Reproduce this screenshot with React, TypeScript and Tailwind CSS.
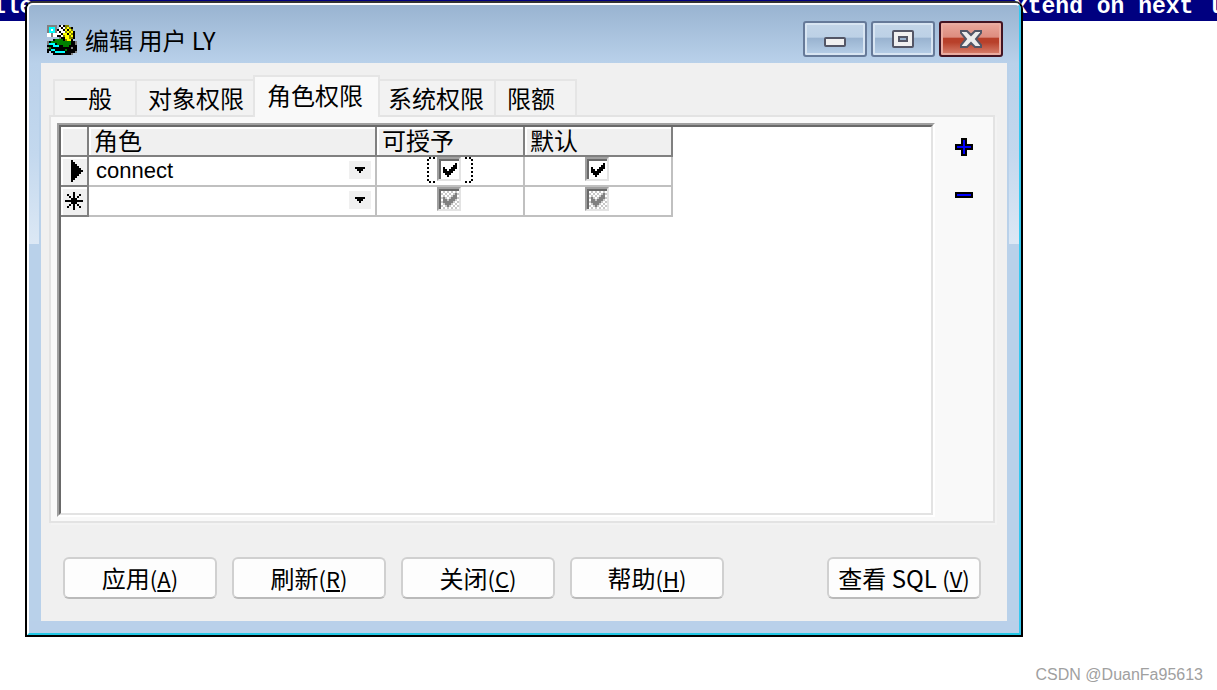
import { useState } from "react";
import clsx from "clsx";

const palette: Record<string, string> = {
  K: "#000000",
  G: "#808080",
  C: "#00ffff",
  W: "#ffffff",
  Y: "#ffff00",
  O: "#808000",
  g: "#008000",
  B: "#0000ff",
};

const userIcon = [
  "GGGGG.KWKOO....",
  "GCCCG.WKWOYOK..",
  "GCWCGKWWKYKYO..",
  "GCCCGWKWWOYOYK.",
  "WWGWWWWKYYKYOK.",
  "WWGWWKKWOYYOYK.",
  "......GKKYYOOK.",
  "...KggggKOYYK..",
  "GKggggggggggKKG",
  "GCCCKgggggggKKG",
  "KKKCCCKKgggKKKK",
  "GgKKKKKKKKKKGKK",
  "KKCCKKKKKgKKKKK",
  "K.KKCCCCCKKKKKG",
  "...KKKKKKKKKG..",
];

const plusIcon = [
  "...KKK...",
  "...KBK...",
  "...KBK...",
  "KKKKBKKKK",
  "KBBBBBBBK",
  "KKKKBKKKK",
  "...KBK...",
  "...KBK...",
  "...KKK...",
];

const minusIcon = ["KKKKKKKKK", "KBBBBBBBK", "KKKKKKKKK"];

const arrowIcon = ["KKKKK", ".KKK.", "..K.."];

const checkIcon = ["......K", ".....KK", "K...KKK", "KK.KKK.", "KKKKK..", ".KKK...", "..K...."];

const currentRowIcon = ["K.....", "KK....", "KKK...", "KKKK..", "KKKKK.", "KKKKKK", "KKKKK.", "KKKK..", "KKK...", "KK....", "K....."];

const newRowIcon = [
  "....K....",
  ".K..K..K.",
  "..K.K.K..",
  "...KKK...",
  "KKKKKKKKK",
  "...KKK...",
  "..K.K.K..",
  ".K..K..K.",
  "....K....",
];

function PixelIcon({ rows, className, color }: { rows: string[]; className?: string; color?: string }) {
  const width = rows[0].length;
  return (
    <svg
      width={width * 2}
      height={rows.length * 2}
      viewBox={`0 0 ${width} ${rows.length}`}
      shapeRendering="crispEdges"
      className={clsx("shrink-0", className)}
      aria-hidden="true"
    >
      {rows.map((row, y) =>
        row.split("").map((c, x) =>
          c === "." ? null : (
            <rect key={`${x}-${y}`} x={x} y={y} width="1" height="1" fill={color ?? palette[c]} />
          )
        )
      )}
    </svg>
  );
}

const tabs = [
  { name: "一般", size: "w-[82px] pl-[9px]" },
  { name: "对象权限", size: "w-[118px] pl-[11px]" },
  { name: "角色权限", size: "w-[127px] pl-3" },
  { name: "系统权限", size: "w-[116px] pl-2" },
  { name: "限额", size: "w-[81px] pl-[11px]" },
];

const actions = [
  { name: "应用", hotkey: "A" },
  { name: "刷新", hotkey: "R" },
  { name: "关闭", hotkey: "C" },
  { name: "帮助", hotkey: "H" },
];

function TitleButtons() {
  const base = "w-16 h-9 rounded-[3px] border-2 flex items-center justify-center";
  const blue =
    "border-[#667a99] bg-[linear-gradient(#c3d5e8,#bcd1e6_45%,#98b2cf_46%,#b7cfe8)] shadow-[inset_0_0_0_2px_#d8e5f2]";
  return (
    <div className="flex gap-1">
      <button aria-label="最小化" className={clsx(base, blue)}>
        <svg width="22" height="18" viewBox="0 0 22 18" aria-hidden="true">
          <rect x="1" y="8" width="20" height="8" rx="1" fill="#f0f0f0" stroke="#535666" strokeWidth="2" />
        </svg>
      </button>
      <button aria-label="最大化" className={clsx(base, blue)}>
        <svg width="22" height="18" viewBox="0 0 22 18" aria-hidden="true">
          <rect x="1" y="1" width="20" height="16" rx="1" fill="#f0f0f0" stroke="#535666" strokeWidth="2" />
          <rect x="7" y="7" width="8" height="4" fill="#98b2cf" stroke="#535666" strokeWidth="2" />
        </svg>
      </button>
      <button
        aria-label="关闭窗口"
        className={clsx(
          base,
          "border-[#431422] bg-[linear-gradient(#eaa89c,#dd8c7e_45%,#b8402a_46%,#b8402a_60%,#d98572)] shadow-[inset_0_0_0_2px_#e9aca0]"
        )}
      >
        <svg width="22" height="18" viewBox="0 0 22 18" aria-hidden="true">
          <path
            d="M1 1h6l4 4 4-4h6v2l-5 6 5 6v2h-6l-4-4-4 4H1v-2l5-6-5-6z"
            fill="#ececec"
            stroke="#535666"
            strokeWidth="2"
          />
        </svg>
      </button>
    </div>
  );
}

function RoleSelect({ label, value }: { label: string; value: string }) {
  return (
    <div className="grid h-7 items-center">
      <select
        aria-label={label}
        defaultValue={value}
        className="col-start-1 row-start-1 h-7 w-full appearance-none bg-white pl-[7px] font-['Liberation_Sans','Noto_Sans_CJK_SC',sans-serif] text-[22px] leading-7 outline-none"
      >
        <option value=""></option>
        <option value="connect">connect</option>
      </select>
      <span className="pointer-events-none col-start-1 row-start-1 mr-1 mb-[2px] flex h-[18px] w-[22px] items-center justify-center justify-self-end bg-[#f0f0f0]">
        <PixelIcon rows={arrowIcon} />
      </span>
    </div>
  );
}

function GridCheck({ label, disabled, focused }: { label: string; disabled?: boolean; focused?: boolean }) {
  return (
    <div className="grid h-7 justify-center">
      {focused && (
        <svg width="46" height="26" className="col-start-1 row-start-1" aria-hidden="true">
          <path
            d="M8 1H1V25H8M38 1H45V25H38"
            fill="none"
            stroke="#000"
            strokeWidth="2"
            strokeDasharray="2 2"
            shapeRendering="crispEdges"
          />
        </svg>
      )}
      <input
        type="checkbox"
        aria-label={label}
        defaultChecked
        disabled={disabled}
        className={clsx(
          "col-start-1 row-start-1 mr-[2px] h-6 w-6 appearance-none justify-self-center border-2 border-t-[#a0a0a0] border-r-[#e3e3e3] border-b-[#e3e3e3] border-l-[#a0a0a0] shadow-[inset_2px_2px_0_#696969]",
          disabled
            ? "bg-[repeating-conic-gradient(#c8c8c8_0_25%,#ffffff_0_50%)] bg-[length:4px_4px]"
            : "bg-white"
        )}
      />
      <PixelIcon
        rows={checkIcon}
        color={disabled ? "#808080" : "#000000"}
        className="pointer-events-none col-start-1 row-start-1 mt-[6px] justify-self-center"
      />
    </div>
  );
}

function RoleTable() {
  const head =
    "border-r-2 border-b-2 border-[#808080] bg-[#f0f0f0] p-0 pb-[2px] pl-[5px] text-left font-normal leading-[26px] shadow-[inset_2px_2px_0_#fff]";
  const cell = "border-r-2 border-b-2 border-[#c0c0c0] p-0";
  const marker = "border-r-2 border-b-2 border-[#808080] bg-[#f0f0f0] p-0 shadow-[inset_2px_2px_0_#fff]";
  return (
    <table className="w-[612px] table-fixed border-separate border-spacing-0 text-2xl leading-7">
      <thead>
        <tr className="h-[30px]">
          <th className={clsx(head, "w-7")} aria-label="状态"></th>
          <th className={clsx(head, "w-72")}>角色</th>
          <th className={head}>可授予</th>
          <th className={head}>默认</th>
        </tr>
      </thead>
      <tbody>
        <tr className="h-[30px]">
          <td className={marker}>
            <PixelIcon rows={currentRowIcon} className="ml-[10px]" />
          </td>
          <td className={cell}>
            <RoleSelect label="角色 connect" value="connect" />
          </td>
          <td className={cell}>
            <GridCheck label="connect 可授予" focused />
          </td>
          <td className={cell}>
            <GridCheck label="connect 默认" />
          </td>
        </tr>
        <tr className="h-[30px]">
          <td className={marker}>
            <PixelIcon rows={newRowIcon} className="ml-1" />
          </td>
          <td className={cell}>
            <RoleSelect label="新角色" value="" />
          </td>
          <td className={cell}>
            <GridCheck label="新角色 可授予" disabled />
          </td>
          <td className={cell}>
            <GridCheck label="新角色 默认" disabled />
          </td>
        </tr>
      </tbody>
    </table>
  );
}

function ActionButton({ name, hotkey }: { name: string; hotkey: string }) {
  return (
    <button className="h-[42px] w-[154px] rounded-md border-2 border-[#d0d0d0] border-b-[#bababa] bg-[#fdfdfd] text-2xl leading-7 whitespace-nowrap">
      {name}
      <span className="text-[22px]">
        (<u className="decoration-2 underline-offset-2">{hotkey}</u>)
      </span>
    </button>
  );
}

export default function App() {
  const [active, setActive] = useState(2);
  const edge = "w-3 shrink-0 bg-[#b9d1ea]";
  const glow = "h-[181px] bg-[linear-gradient(#b9d1ea,#c3d8ee_50%,#dce8f5)]";

  return (
    <div className="relative flex min-h-screen flex-col bg-white font-['Noto_Sans_CJK_SC',sans-serif] text-black">
      <div className="absolute inset-x-0 top-0 flex h-[21px] justify-between overflow-hidden bg-[#000080] font-['Liberation_Mono',monospace] text-[23px] leading-[14px] font-bold whitespace-pre text-white">
        <span className="-ml-2">ile</span>
        <span className="-mr-1">xtend on next l</span>
      </div>

      <div className="relative mt-px mr-[194px] ml-[25px] rounded-t-lg border-2 border-black border-t-[#333] bg-[#b9d1ea]">
        <div className="rounded-t-md border-2 border-t-white border-r-[#35c8ee] border-b-[#22c8e6] border-l-white">
          <header className="flex h-[58px] items-center justify-between rounded-t bg-linear-to-b from-[#99b4d1] to-[#b9d1ea] pr-4 pl-[18px]">
            <div className="flex items-center gap-2 pt-3">
              <PixelIcon rows={userIcon} />
              <h1 className="text-2xl leading-7">编辑 用户 LY</h1>
            </div>
            <div className="pt-[10px]">
              <TitleButtons />
            </div>
          </header>

          <div className="flex">
            <div className={clsx(edge, "pr-[2px]")}>
              <div className={glow}></div>
            </div>

            <main className="min-w-0 flex-1 bg-[#f0f0f0] pt-3 pr-3 pb-[22px] pl-2">
              <div role="tablist" className="ml-1 flex h-10 items-end">
                {tabs.map((tab, i) => (
                  <button
                    key={tab.name}
                    role="tab"
                    aria-selected={i === active}
                    onClick={() => setActive(i)}
                    className={clsx(
                      "relative shrink-0 border-t-2 border-[#e5e5e5] text-left text-2xl whitespace-nowrap",
                      tab.size,
                      i === active
                        ? "z-10 -mb-[2px] h-[42px] border-x-2 bg-[#f9f9f9] pb-1 leading-9"
                        : "h-9 bg-[#f2f2f2] leading-[34px]",
                      i < active && "border-l-2",
                      i > active && "border-r-2"
                    )}
                  >
                    {tab.name}
                  </button>
                ))}
              </div>

              <div
                role="tabpanel"
                className="flex border-2 border-[#e3e3e3] bg-[#f9f9f9] pt-[6px] pb-1 pl-[6px] shadow-[2px_2px_0_#f3f3f3]"
              >
                <div className="min-w-0 flex-1 border-2 border-t-[#a0a0a0] border-r-white border-b-white border-l-[#a0a0a0]">
                  <div className="min-h-[390px] border-2 border-t-[#696969] border-r-[#e3e3e3] border-b-[#e3e3e3] border-l-[#696969] bg-white">
                    <RoleTable />
                  </div>
                </div>
                <div className="flex w-[58px] flex-col items-center">
                  <button aria-label="添加" className="flex size-12 items-center justify-center">
                    <PixelIcon rows={plusIcon} />
                  </button>
                  <button aria-label="删除" className="flex size-12 items-center justify-center">
                    <PixelIcon rows={minusIcon} />
                  </button>
                </div>
              </div>

              <div className="mt-[34px] flex justify-between px-[14px]">
                <div className="flex gap-[15px]">
                  {actions.map((action) => (
                    <ActionButton key={action.name} {...action} />
                  ))}
                </div>
                <ActionButton name="查看 SQL " hotkey="V" />
              </div>
            </main>

            <div className={clsx(edge, "pl-[2px]")}>
              <div className={glow}></div>
            </div>
          </div>
          <div className="h-3 bg-[#b9d0ea]"></div>
        </div>
      </div>

      <footer className="mt-auto mr-[14px] mb-[3px] self-end font-['Liberation_Sans',sans-serif] text-base leading-6 text-[#a0a0a0]">
        CSDN @DuanFa95613
      </footer>
    </div>
  );
}
